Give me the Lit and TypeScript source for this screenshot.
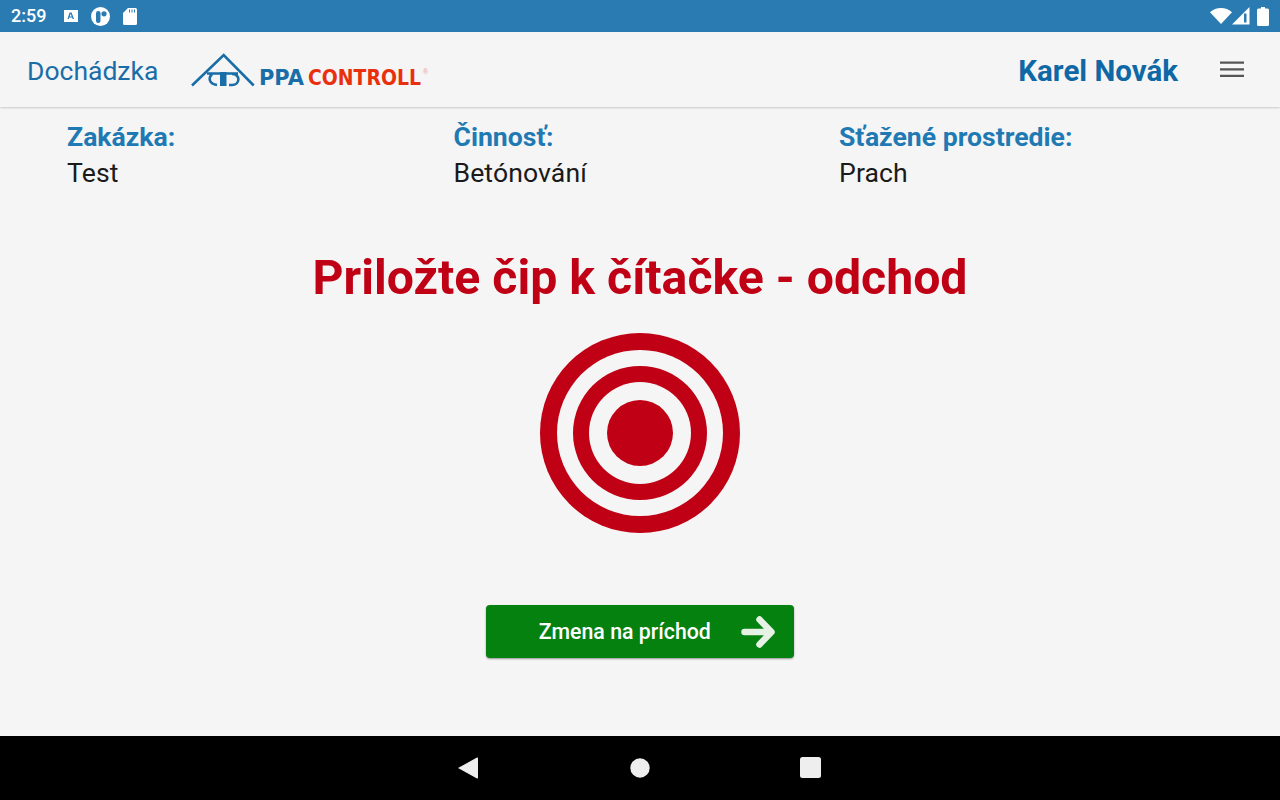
import { LitElement, html, css } from "lit";
import { customElement } from "lit/decorators.js";

@customElement("app-root")
export class AppRoot extends LitElement {
  static styles = css`
    :host { display: flex; flex-direction: column; width: 1280px; height: 800px; overflow: hidden; background: #f5f5f5; font-family: Roboto, "Noto Sans", sans-serif; }
    .status { height: 32px; flex: none; background: #2b7bb3; display: flex; align-items: center; color: #fff; box-sizing: border-box; padding: 0 11px 0 11px; }
    .time { font-size: 18px; font-weight: 500; width: 53px; line-height: 32px; }
    .sicons { display: flex; align-items: center; }
    .sright { margin-left: auto; display: flex; align-items: center; }
    svg { display: block; flex: none; }
    .a { margin-right: 13px; }
    .p { margin-right: 13px; }
    .sig { margin-right: 7px; }
    .header { height: 75px; flex: none; box-sizing: border-box; display: flex; align-items: center; padding: 2px 36px 0 27px; background: #f5f5f5; box-shadow: 0 1px 2px rgba(0,0,0,.18); position: relative; }
    .brand { font-size: 26.5px; color: #1a6ea8; width: 164px; }
    .user { margin-left: auto; font-size: 29.5px; font-weight: 700; color: #0f68a6; margin-right: 42px; }
    .burger { margin-bottom: 3px; }
    .main { flex: 1; display: flex; flex-direction: column; align-items: center; }
    .info { align-self: stretch; display: grid; grid-template-columns: 386.5px 385.5px 1fr; padding: 12px 0 0 67px; }
    .label { font-size: 26.6px; font-weight: 700; color: #1f7ab4; line-height: 36px; }
    .value { font-size: 26.6px; color: #1a1a1a; line-height: 36px; letter-spacing: 0.1px; }
    h1 { margin: 57px 0 0; font-size: 48.2px; line-height: 60px; font-weight: 700; color: #c00015; }
    .target { margin-top: 25px; }
    .btn { margin-top: 72px; width: 308.6px; height: 53px; box-sizing: border-box; background: #04810f; border: 0; border-radius: 4px; box-shadow: 0 1px 2px rgba(0,0,0,.4); color: #fff; font: 500 21.3px Roboto, sans-serif; display: flex; align-items: center; padding: 0 19px 0 53px; justify-content: space-between; }
    .nav { height: 64px; flex: none; background: #000; display: flex; align-items: center; justify-content: center; }
    .navin { display: flex; align-items: center; width: 364px; box-sizing: border-box; justify-content: space-between; padding: 0 1px 1px 0; }
    .home { margin-left: 2px; }
  `;

  render() {
    return html`
      <div class="status">
        <span class="time">2:59</span>
        <div class="sicons">
          <svg class="a" width="14" height="14" viewBox="0 0 14 14"><path fill="#fff" d="M0 1h14v12H0z"/><path fill="#2b7bb3" d="M5.600 3.500h2L10 10H8.600l-.5-1.400H5.300L4.800 10H3.500zM5.700 7.400h2L6.700 4.800z"/></svg>
          <svg class="p" width="19" height="19" viewBox="0 0 19 19"><circle cx="9.500" cy="9.500" r="9.500" fill="#fff"/><rect x="5" y="4" width="4.500" height="12" rx="2.200" fill="#2b7bb3"/><circle cx="13" cy="6.800" r="2.600" fill="#2b7bb3"/></svg>
          <svg width="14" height="17" viewBox="0 0 14 17"><path fill="#fff" d="M5 0h7.500A1.500 1.500 0 0 1 14 1.500v14a1.500 1.500 0 0 1-1.500 1.500h-11A1.500 1.500 0 0 1 0 15.500V5z"/><path fill="#2b7bb3" d="M6 1.500h1v3H6zM8.500 1.500h1v3h-1zM11 1.500h1v3h-1z"/></svg>
        </div>
        <div class="sright">
          <svg width="22" height="16" viewBox="0 0 22 16"><path fill="#fff" d="M11 16 0 4.200C3 1.600 6.800 0 11 0s8 1.600 11 4.200z"/></svg>
          <svg class="sig" width="18" height="18" viewBox="0 0 18 18"><path fill="#fff" d="M0 17.500 17.500 0v17.500z"/><path fill="#2b7bb3" d="M12 6.500h2.500v9H12z"/></svg>
          <svg width="12" height="19" viewBox="0 0 12 19"><path fill="#fff" d="M4 0h4v1.500h2.500A1.500 1.500 0 0 1 12 3v14.500a1.500 1.500 0 0 1-1.500 1.500h-9A1.500 1.500 0 0 1 0 17.500V3a1.500 1.500 0 0 1 1.500-1.500H4z"/></svg>
        </div>
      </div>
      <div class="header">
        <span class="brand">Dochádzka</span>
        <svg width="244" height="40" viewBox="0 0 244 40">
          <path fill="none" stroke="#1a6ea8" stroke-width="2.600" d="M1 34.500 32.700 4l30 30.500"/>
          <path fill="#1a6ea8" d="M29 21h6.500v14H29z"/>
          <path fill="none" stroke="#1a6ea8" stroke-width="2.600" d="M16 22.500h31M21 23c-4 4-3 10 5 11M38 34h3c8 0 9-11 0-11"/>
          <text x="68" y="33.500" font-family="'DejaVu Sans',sans-serif" font-size="21" font-weight="700" fill="#1a6ea8" textLength="45" lengthAdjust="spacingAndGlyphs">PPA</text>
          <text x="117" y="33.500" font-family="'DejaVu Sans',sans-serif" font-size="21" font-weight="700" fill="#e8300f" textLength="113" lengthAdjust="spacingAndGlyphs">CONTROLL</text>
          <text x="232" y="23" font-family="'Liberation Sans',sans-serif" font-size="7" fill="#ec9a90">®</text>
        </svg>
        <span class="user">Karel Novák</span>
        <svg class="burger" width="24" height="17" viewBox="0 0 24 17"><path fill="#555" d="M0 .5h24v2.200H0zM0 7.200h24v2.200H0zM0 13.800h24V16H0z"/></svg>
      </div>
      <div class="main">
        <div class="info">
          <div><div class="label">Zakázka:</div><div class="value">Test</div></div>
          <div><div class="label">Činnosť:</div><div class="value">Betónování</div></div>
          <div><div class="label">Sťažené prostredie:</div><div class="value">Prach</div></div>
        </div>
        <h1>Priložte čip k čítačke - odchod</h1>
        <svg class="target" width="200" height="200" viewBox="0 0 200 200">
          <circle cx="100" cy="100" r="100" fill="#c00015"/>
          <circle cx="100" cy="100" r="83" fill="#f5f5f5"/>
          <circle cx="100" cy="100" r="67" fill="#c00015"/>
          <circle cx="100" cy="100" r="51" fill="#f5f5f5"/>
          <circle cx="100" cy="100" r="33" fill="#c00015"/>
        </svg>
        <button class="btn">
          <span>Zmena na príchod</span>
          <svg width="34" height="34" viewBox="0 0 34 34"><path fill="none" stroke="#e6f2e6" stroke-width="6.500" stroke-linecap="round" stroke-linejoin="round" d="M3.500 17h26M18.500 4.500 30.500 17 18.500 29.500"/></svg>
        </button>
      </div>
      <div class="nav">
        <div class="navin">
          <svg width="20" height="22" viewBox="0 0 20 22"><path fill="#eee" d="M19 .6a.8.800 0 0 1 1 .8v19.200a.8.800 0 0 1-1 .8L0 11z"/></svg>
          <svg class="home" width="20" height="20" viewBox="0 0 20 20"><circle cx="10" cy="10" r="9.700" fill="#eee"/></svg>
          <svg width="21" height="21" viewBox="0 0 21 21"><rect width="21" height="21" rx="2.500" fill="#eee"/></svg>
        </div>
      </div>
    `;
  }
}
